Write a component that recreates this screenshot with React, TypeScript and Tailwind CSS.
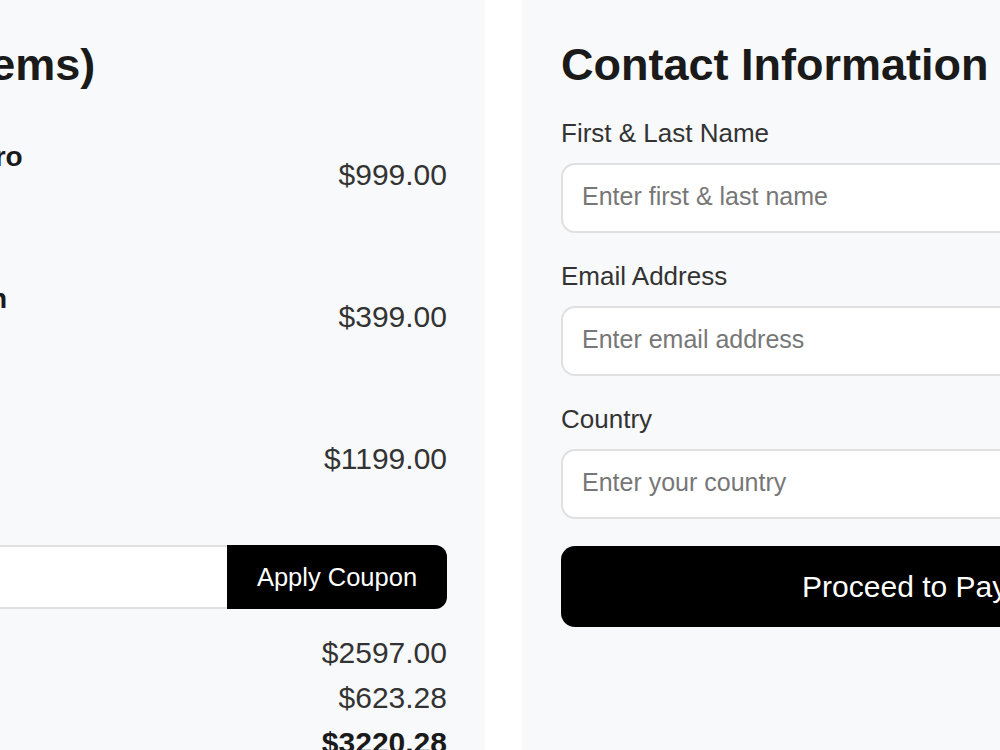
import React, { useState } from "react";

interface CartItem {
    name: string;
    qty: number;
    price: number;
}

const items: CartItem[] = [
    { name: "iPhone 15 Pro", qty: 1, price: 999 },
    { name: "iPad 9th Gen", qty: 1, price: 399 },
    { name: "iPad Pro", qty: 1, price: 1199 },
];

const money = (n: number) => "$" + n.toFixed(2);

export default function App() {
    const [coupon, setCoupon] = useState("");
    const [name, setName] = useState("");
    const [email, setEmail] = useState("");
    const [country, setCountry] = useState("");

    const subtotal = items.reduce((s, i) => s + i.price * i.qty, 0);
    const tax = subtotal * 0.24;

    return (
        <div className="min-h-screen bg-white overflow-hidden font-['Liberation_Sans',Arial,sans-serif]">
            <div className="flex gap-[37px] ml-[-346px] w-max min-h-[750px]">
                {/* cart */}
                <div className="w-[831px] bg-[#f8f9fa] px-[38px] pt-[38px]">
                    <h2 className="pl-[4px] text-[45px] leading-[54px] font-bold text-[#1a1a1a]">
                        Your Cart ({items.length} items)
                    </h2>
                    <div className="mt-[22px] flex flex-col gap-[22px]">
                        {items.map((item) => (
                            <div key={item.name} className="flex items-center justify-between h-[120px]">
                                <div className="flex items-center gap-[24px]">
                                    <div className="w-[120px] h-[120px] rounded-[15px] bg-gray-200" />
                                    <div className="pb-[4px]">
                                        <div className="text-[28px] leading-[34px] font-bold text-[#1a1a1a]">
                                            {item.name}
                                        </div>
                                        <div className="text-[22px] leading-[30px] text-gray-500">
                                            Qty: {item.qty}
                                        </div>
                                    </div>
                                </div>
                                <span className="text-[30px] leading-[45px] text-[#333]">{money(item.price)}</span>
                            </div>
                        ))}
                    </div>
                    <div className="mt-[27px] flex h-[64px]">
                        <input
                            type="text"
                            value={coupon}
                            onChange={(e) => setCoupon(e.target.value)}
                            placeholder="Enter coupon code"
                            className="flex-1 min-w-0 bg-white border-y-2 border-l-2 border-[#e0e0e0] rounded-l-[12px] px-5 text-[25px] outline-none"
                        />
                        <button className="w-[220px] bg-black text-white text-[25.5px] rounded-r-[12px]">
                            Apply Coupon
                        </button>
                    </div>
                    <div className="mt-[21px] text-[30px] leading-[45px] text-[#333]">
                        <div className="flex justify-between">
                            <span>Subtotal</span>
                            <span>{money(subtotal)}</span>
                        </div>
                        <div className="flex justify-between">
                            <span>Tax</span>
                            <span>{money(tax)}</span>
                        </div>
                        <div className="flex justify-between font-bold text-[#1a1a1a]">
                            <span>Total</span>
                            <span>{money(subtotal + tax)}</span>
                        </div>
                    </div>
                </div>

                {/* contact form */}
                <div className="w-[831px] bg-[#f8f9fa] pl-[39px] pr-[38px] pt-[38px]">
                    <h2 className="text-[45px] leading-[54px] font-bold text-[#1a1a1a]">Contact Information</h2>
                    <div className="mt-[22px] flex flex-col gap-[24px]">
                        <div>
                            <label className="block text-[26px] leading-[39px] text-[#333]">First &amp; Last Name</label>
                            <input
                                type="text"
                                value={name}
                                onChange={(e) => setName(e.target.value)}
                                placeholder="Enter first & last name"
                                className="mt-[10px] w-full h-[70px] rounded-[14px] border-2 border-[#e0e0e0] bg-white px-[19px] pb-[3px] text-[25px] placeholder:text-[#777] outline-none"
                            />
                        </div>
                        <div>
                            <label className="block text-[26px] leading-[39px] text-[#333]">Email Address</label>
                            <input
                                type="email"
                                value={email}
                                onChange={(e) => setEmail(e.target.value)}
                                placeholder="Enter email address"
                                className="mt-[10px] w-full h-[70px] rounded-[14px] border-2 border-[#e0e0e0] bg-white px-[19px] pb-[3px] text-[25px] placeholder:text-[#777] outline-none"
                            />
                        </div>
                        <div>
                            <label className="block text-[26px] leading-[39px] text-[#333]">Country</label>
                            <input
                                type="text"
                                value={country}
                                onChange={(e) => setCountry(e.target.value)}
                                placeholder="Enter your country"
                                className="mt-[10px] w-full h-[70px] rounded-[14px] border-2 border-[#e0e0e0] bg-white px-[19px] pb-[3px] text-[25px] placeholder:text-[#777] outline-none"
                            />
                        </div>
                    </div>
                    <button className="mt-[27px] w-full h-[81px] rounded-[14px] bg-black text-white text-[30px]">
                        Proceed to Payment
                    </button>
                </div>
            </div>
        </div>
    );
}
